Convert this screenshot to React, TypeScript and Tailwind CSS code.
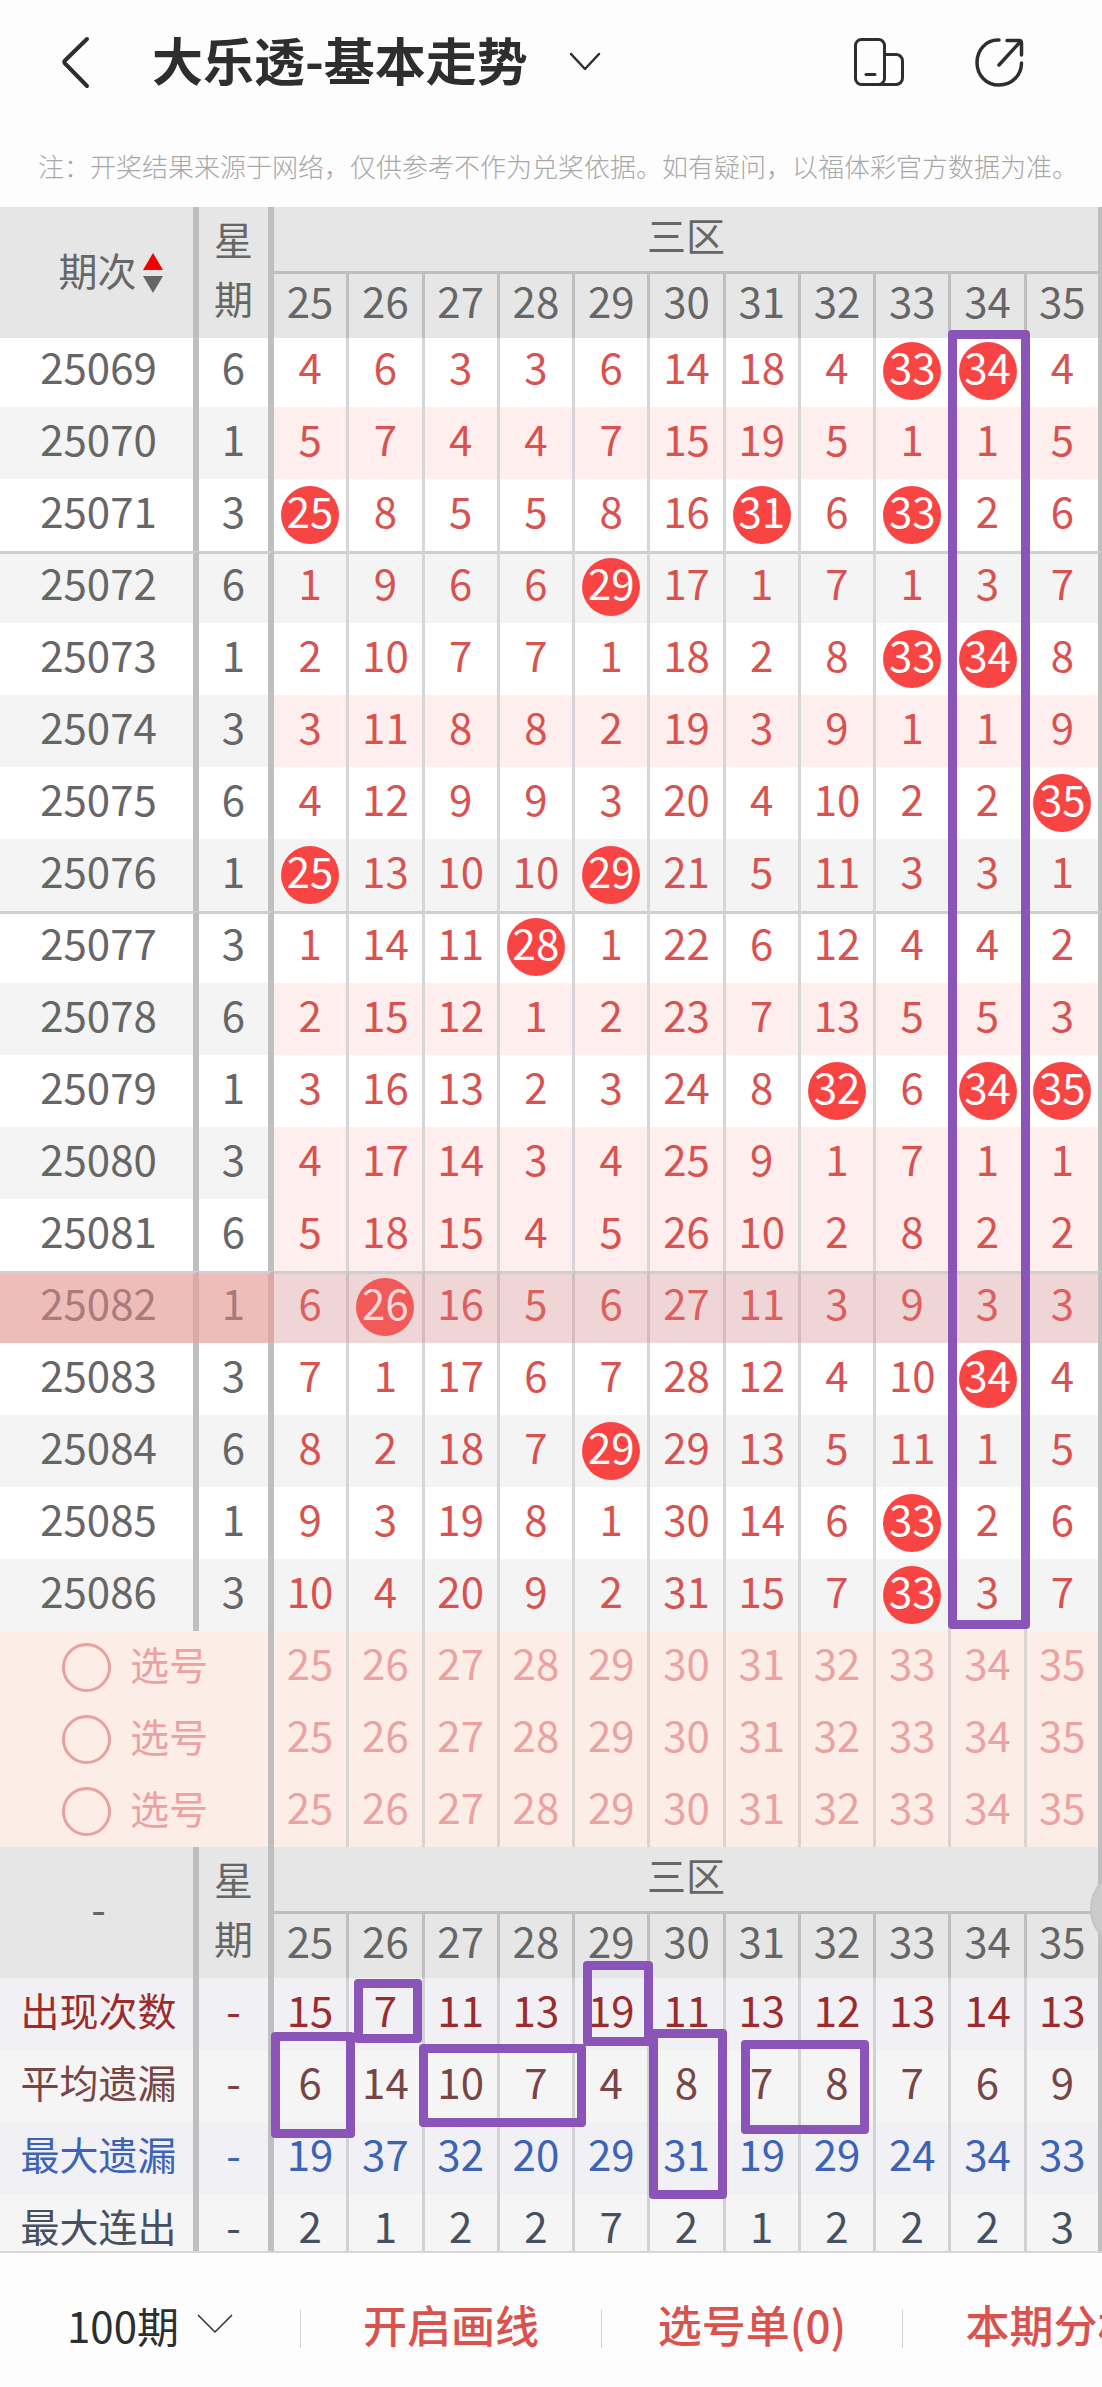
import type { ReactNode } from 'react'
import clsx from 'clsx'

const numbers = [25, 26, 27, 28, 29, 30, 31, 32, 33, 34, 35]

type Tone = 'white' | 'gray' | 'pink' | 'pinkWhite' | 'current'

type Draw = {
  issue: string
  day: number
  tone: Tone
  hits: number[] // drawn numbers in this zone
  cells: number[]
  divider?: boolean
}

const draws: Draw[] = [
  { issue: '25069', day: 6, tone: 'white', hits: [33, 34], cells: [4, 6, 3, 3, 6, 14, 18, 4, 33, 34, 4] },
  { issue: '25070', day: 1, tone: 'pink', hits: [], cells: [5, 7, 4, 4, 7, 15, 19, 5, 1, 1, 5] },
  { issue: '25071', day: 3, tone: 'white', hits: [25, 31, 33], cells: [25, 8, 5, 5, 8, 16, 31, 6, 33, 2, 6] },
  { issue: '25072', day: 6, tone: 'gray', hits: [29], cells: [1, 9, 6, 6, 29, 17, 1, 7, 1, 3, 7], divider: true },
  { issue: '25073', day: 1, tone: 'white', hits: [33, 34], cells: [2, 10, 7, 7, 1, 18, 2, 8, 33, 34, 8] },
  { issue: '25074', day: 3, tone: 'pink', hits: [], cells: [3, 11, 8, 8, 2, 19, 3, 9, 1, 1, 9] },
  { issue: '25075', day: 6, tone: 'white', hits: [35], cells: [4, 12, 9, 9, 3, 20, 4, 10, 2, 2, 35] },
  { issue: '25076', day: 1, tone: 'gray', hits: [25, 29], cells: [25, 13, 10, 10, 29, 21, 5, 11, 3, 3, 1] },
  { issue: '25077', day: 3, tone: 'white', hits: [28], cells: [1, 14, 11, 28, 1, 22, 6, 12, 4, 4, 2], divider: true },
  { issue: '25078', day: 6, tone: 'pink', hits: [], cells: [2, 15, 12, 1, 2, 23, 7, 13, 5, 5, 3] },
  { issue: '25079', day: 1, tone: 'white', hits: [32, 34, 35], cells: [3, 16, 13, 2, 3, 24, 8, 32, 6, 34, 35] },
  { issue: '25080', day: 3, tone: 'pink', hits: [], cells: [4, 17, 14, 3, 4, 25, 9, 1, 7, 1, 1] },
  { issue: '25081', day: 6, tone: 'pinkWhite', hits: [], cells: [5, 18, 15, 4, 5, 26, 10, 2, 8, 2, 2] },
  { issue: '25082', day: 1, tone: 'current', hits: [26], cells: [6, 26, 16, 5, 6, 27, 11, 3, 9, 3, 3], divider: true },
  { issue: '25083', day: 3, tone: 'white', hits: [34], cells: [7, 1, 17, 6, 7, 28, 12, 4, 10, 34, 4] },
  { issue: '25084', day: 6, tone: 'gray', hits: [29], cells: [8, 2, 18, 7, 29, 29, 13, 5, 11, 1, 5] },
  { issue: '25085', day: 1, tone: 'white', hits: [33], cells: [9, 3, 19, 8, 1, 30, 14, 6, 33, 2, 6] },
  { issue: '25086', day: 3, tone: 'gray', hits: [33], cells: [10, 4, 20, 9, 2, 31, 15, 7, 33, 3, 7] },
]

const stats = [
  { label: '出现次数', row: 'h-[72px] bg-[#f1f0f4] text-[#9c2c2c]', values: [15, 7, 11, 13, 19, 11, 13, 12, 13, 14, 13] },
  { label: '平均遗漏', row: 'h-[72px] bg-[#f5f5f5] text-[#784545]', values: [6, 14, 10, 7, 4, 8, 7, 8, 7, 6, 9] },
  { label: '最大遗漏', row: 'h-[72px] bg-[#f0f0f5] text-[#3c63b4]', values: [19, 37, 32, 20, 29, 31, 19, 29, 24, 34, 33] },
  { label: '最大连出', row: 'h-[57px] bg-[#f5f5f5] text-[#465060]', values: [2, 1, 2, 2, 7, 2, 1, 2, 2, 2, 3] },
]

// Hand-drawn frames. x and w are in number columns, y and h in pixels from the table's top.
const frames = [
  { x: 8.95, w: 1.09, y: 123, h: 1299 },
  { x: 1.06, w: 0.91, y: 1772, h: 64 },
  { x: -0.04, w: 1.11, y: 1825, h: 106 },
  { x: 1.93, w: 2.22, y: 1837, h: 83 },
  { x: 4.11, w: 0.93, y: 1754, h: 85 },
  { x: 4.98, w: 1.04, y: 1822, h: 170 },
  { x: 6.21, w: 1.7, y: 1833, h: 94 },
]

const sideTone: Record<Tone, string> = {
  white: 'bg-white text-[#666]',
  gray: 'bg-[#f4f4f4] text-[#666]',
  pink: 'bg-[#f4f4f4] text-[#666]',
  pinkWhite: 'bg-white text-[#666]',
  current: 'bg-[#eebdba] text-[#ab7b7b]',
}

const cellTone: Record<Tone, string> = {
  white: 'bg-white text-[#d8524f]',
  gray: 'bg-[#f4f4f4] text-[#d8524f]',
  pink: 'bg-[#feefee] text-[#d8524f]',
  pinkWhite: 'bg-[#feefee] text-[#d8524f]',
  current: 'bg-[#efd5d5] text-[#dc605e]',
}

export default function App() {
  return (
    <div className="flex h-screen flex-col overflow-hidden bg-[#fdfdfd] font-['Noto_Sans_CJK_SC',sans-serif]">
      <TopBar />
      <p className="h-[82px] shrink-0 overflow-hidden pl-[38px] text-[26px] leading-[82px] font-light whitespace-nowrap text-[#a8a8a8]">
        注：开奖结果来源于网络，仅供参考不作为兑奖依据。如有疑问，以福体彩官方数据为准。
      </p>
      <main className="relative min-h-0 flex-1">
        <div className="h-full overflow-y-auto [scrollbar-width:none]">
          <div className="relative overflow-hidden">
            <TrendTable />
            <Frames />
          </div>
        </div>
        <button aria-label="更多" className="absolute top-[1662px] right-0 h-20 w-3 overflow-hidden">
          <span className="absolute top-0 left-0 size-20 rounded-full border-2 border-[#c4c4c4] bg-[#cbcbcb]" />
        </button>
      </main>
      <BottomBar />
    </div>
  )
}

function TopBar() {
  return (
    <header className="flex h-[125px] shrink-0 items-center pr-[78px] pb-[2px] pl-[60px] text-[#2e2e2e]">
      <button aria-label="返回">
        <svg width="30" height="54" viewBox="0 0 30 54" fill="none" stroke="currentColor" strokeWidth="4" strokeLinecap="round" strokeLinejoin="round">
          <path d="M27 4 5 25.500q-1.500 1.500 0 3L27 51" />
        </svg>
      </button>
      <h1 className="ml-[62px] pb-[6px] text-[51px] leading-[60px] font-bold">大乐透-基本走势</h1>
      <button aria-label="切换走势" className="ml-10">
        <svg width="34" height="22" viewBox="0 0 34 22" fill="none" stroke="currentColor" strokeWidth="2.500" strokeLinecap="round" strokeLinejoin="round">
          <path d="M3 3l14 15L31 3" />
        </svg>
      </button>
      <div className="ml-auto flex gap-[70px]">
        <button aria-label="切换布局">
          <svg width="50" height="50" viewBox="0 0 50 50" fill="none" stroke="currentColor" strokeWidth="3" strokeLinecap="round" strokeLinejoin="round">
            <rect x="1.500" y="2.500" width="29" height="45" rx="6" />
            <path d="M30.500 17.500H42a6.500 6.500 0 0 1 6.500 6.500v17a6.500 6.500 0 0 1-6.500 6.500H25" />
            <path d="M12 37.500h9" />
          </svg>
        </button>
        <button aria-label="分享">
          <svg width="50" height="50" viewBox="0 0 50 50" fill="none" stroke="currentColor" strokeWidth="3.500" strokeLinecap="round" strokeLinejoin="round">
            <path d="M25 3h-1C12 3 3 13 3 25.500 3 38 12 48 25 48s22.500-10 22.500-22" />
            <path d="M25 28 46.500 4.500" />
            <path d="M33 3.500h12q2.500 0 2.500 2.500v12" />
          </svg>
        </button>
      </div>
    </header>
  )
}

function TrendTable() {
  return (
    <table className="w-full table-fixed border-separate border-spacing-0 text-center text-[42px] leading-[54px]">
      <colgroup>
        <col className="w-[199px]" />
        <col className="w-[75px]" />
        {numbers.map((n) => (
          <col key={n} />
        ))}
      </colgroup>
      <thead>
        <HeadRows>
          <button className="inline-flex items-center gap-[6px] pl-7 align-top text-[39px]">
            <span className="pb-2">期次</span>
            <svg width="20" height="40" viewBox="0 0 20 40">
              <path d="M10 0 20 17H0z" fill="#f50000" />
              <path d="M10 40 0 23h20z" fill="#666" />
            </svg>
          </button>
        </HeadRows>
      </thead>
      <tbody>
        {draws.map((draw, i) => (
          <DrawRow key={draw.issue} draw={draw} first={i === 0} />
        ))}
      </tbody>
      <tbody className="bg-[#fceee6] text-[#eba2a2]">
        {[1, 2, 3].map((line) => (
          <PickRow key={line} line={line} />
        ))}
      </tbody>
      <tbody>
        <HeadRows>
          <span className="block pb-3 pl-1">-</span>
        </HeadRows>
        {stats.map((stat) => (
          <tr key={stat.label} className={stat.row}>
            <th className="border-r-6 border-[#bfbfbf] pt-1 pl-1 align-top text-[39px] font-normal whitespace-nowrap">
              {stat.label}
            </th>
            <td className="border-r-6 border-[#bfbfbf] pt-1 align-top">-</td>
            {stat.values.map((value, i) => (
              <td
                key={numbers[i]}
                className="border-r-3 border-[#d2d2d2] pt-1 align-top last:border-r-4 last:border-[#bfbfbf]"
              >
                {value}
              </td>
            ))}
          </tr>
        ))}
      </tbody>
    </table>
  )
}

function HeadRows({ children }: { children: ReactNode }) {
  return (
    <>
      <tr className="bg-[#e6e6e6] text-[#666]">
        <th rowSpan={2} className="border-r-6 border-[#bfbfbf] font-normal">
          {children}
        </th>
        <th rowSpan={2} className="border-r-6 border-[#bfbfbf] pb-[10px] text-[39px] leading-[59px] font-normal">
          星<br />期
        </th>
        <th colSpan={11} className="h-[67px] border-r-4 border-b-3 border-[#bfbfbf] align-top text-[39px] font-normal">
          三区
        </th>
      </tr>
      <tr className="bg-[#e6e6e6] text-[#666]">
        {numbers.map((n) => (
          <th key={n} className="h-16 border-r-3 border-[#bfbfbf] align-top leading-[52px] font-normal last:border-r-4">
            {n}
          </th>
        ))}
      </tr>
    </>
  )
}

function DrawRow({ draw, first }: { draw: Draw; first: boolean }) {
  const { issue, day, tone, hits, cells, divider } = draw
  const current = tone === 'current'
  const line = clsx(
    'align-top',
    divider && 'border-t-3 border-t-[#cfcfcf]',
    // the divider takes the place of most of the top padding
    divider || first ? 'pt-px' : 'pt-1',
  )
  const side = clsx('border-r-6', sideTone[tone], line, current ? 'border-r-[#dba9a6]' : 'border-r-[#bfbfbf]')

  return (
    <tr className={first ? 'h-[69px]' : 'h-[72px]'}>
      <th className={clsx(side, 'pl-1 font-normal')}>{issue}</th>
      <td className={side}>{day}</td>
      {cells.map((value, i) => (
        <td
          key={numbers[i]}
          className={clsx(
            'border-r-3 last:border-r-4 last:border-r-[#bfbfbf]',
            cellTone[tone],
            line,
            current ? 'border-r-[#d3bcbc]' : 'border-r-[#d6d6d6]',
          )}
        >
          {hits.includes(numbers[i]) ? (
            <span
              className={clsx(
                'mx-auto mt-[3px] block size-[58px] rounded-full leading-[48px]',
                current ? 'bg-[#f15a58] text-[#fbd9d9]' : 'bg-[#f84544] text-white',
              )}
            >
              {value}
            </span>
          ) : (
            value
          )}
        </td>
      ))}
    </tr>
  )
}

function PickRow({ line }: { line: number }) {
  return (
    <tr className="h-[72px]">
      <th colSpan={2} className="border-r-6 border-[#bfbfbf] font-normal">
        <label className="flex items-center gap-[19px] pl-[62px] text-[39px]">
          <input
            type="checkbox"
            name={`pick-${line}`}
            className="size-[49px] appearance-none rounded-full border-3 border-[#e8a0a0]"
          />
          <span className="pb-2">选号</span>
        </label>
      </th>
      {numbers.map((n) => (
        <td key={n} className="border-r-3 border-[#dcd4ce] pt-1 align-top last:border-r-4 last:border-[#bfbfbf]">
          <button className="block w-full">{n}</button>
        </td>
      ))}
    </tr>
  )
}

function Frames() {
  return (
    <div className="pointer-events-none absolute inset-y-0 right-0 left-[274px]">
      {frames.map((f) => (
        <div
          key={`${f.x}-${f.y}`}
          className="absolute rounded-sm border-9 border-[#8b54b8]"
          style={{
            left: `${(f.x / numbers.length) * 100}%`,
            width: `${(f.w / numbers.length) * 100}%`,
            top: f.y,
            height: f.h,
          }}
        />
      ))}
    </div>
  )
}

function BottomBar() {
  return (
    <footer className="flex h-[136px] shrink-0 items-center divide-x divide-[#d0d0d0] overflow-hidden border-t-2 border-[#d6d6d6] bg-[#fdfdfd] pt-[18px] text-[44px] font-medium whitespace-nowrap text-[#da524e]">
      <button className="flex h-[38px] w-[301px] shrink-0 items-center justify-center gap-[18px] pb-[10px] text-[42px] font-normal text-[#2e2e2e]">
        100期
        <svg width="36" height="20" viewBox="0 0 36 20" fill="none" stroke="currentColor" strokeWidth="1.500">
          <path d="M1 1l17 17L35 1" />
        </svg>
      </button>
      <button className="flex h-[38px] w-[301px] shrink-0 items-center justify-center pb-[10px]">开启画线</button>
      <button className="flex h-[38px] w-[301px] shrink-0 items-center justify-center pb-[10px]">选号单(0)</button>
      <button className="flex h-[38px] w-[301px] shrink-0 items-center justify-center pb-[10px]">本期分析</button>
    </footer>
  )
}
